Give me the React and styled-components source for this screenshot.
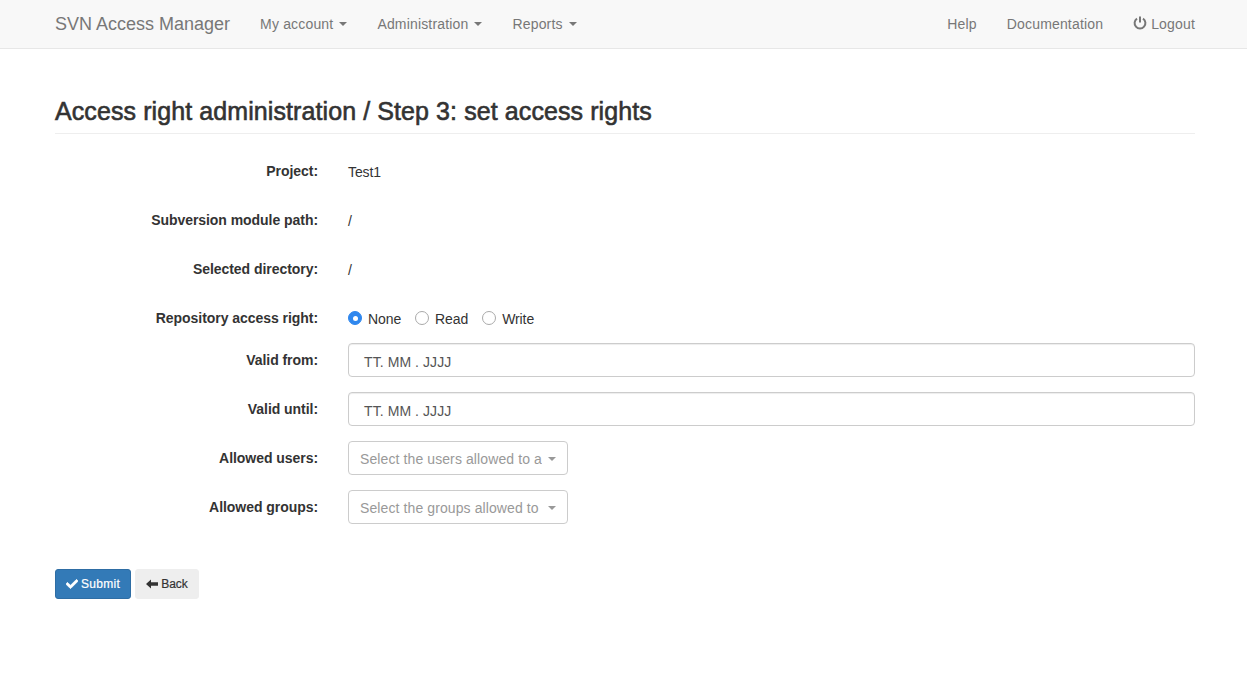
import React from "react";
import styled, { createGlobalStyle } from "styled-components";
import { FaCheck } from "react-icons/fa";

const GlobalStyle = createGlobalStyle`
  * { box-sizing: border-box; }
  body {
    margin: 0;
    background: #fff;
    color: #333;
    font-family: "Liberation Sans", Arial, sans-serif;
    font-size: 14px;
    line-height: 20px;
  }
`;

const Navbar = styled.nav`
  display: flex;
  align-items: center;
  height: 49px;
  padding: 0 52px 0 55px;
  background: #f8f8f8;
  border-bottom: 1px solid #e7e7e7;
`;

const Brand = styled.a`
  font-size: 18px;
  color: #777;
  margin-right: 30px;
`;

const NavLink = styled.a`
  display: flex;
  align-items: center;
  color: #777;
  letter-spacing: 0.17px;
  margin-right: ${(p) => p.$gap ?? 30}px;
`;

const Caret = styled.span`
  display: inline-block;
  margin-left: 6px;
  border-top: 4px solid ${(p) => p.$color || "#777"};
  border-left: 4px solid transparent;
  border-right: 4px solid transparent;
`;

const Spacer = styled.div`
  flex: 1;
`;

const Page = styled.main`
  padding: 49px 52px 0 55px;
`;

const Title = styled.h1`
  margin: 0 0 20px;
  padding-bottom: 9px;
  border-bottom: 1px solid #eee;
  font-size: 25px;
  line-height: 26px;
  font-weight: 500;
  letter-spacing: 0.09px;
  color: #333;
  -webkit-text-stroke: 0.6px #333;
`;

const Row = styled.div`
  display: flex;
  min-height: 34px;
  margin-bottom: ${(p) => p.$gap ?? 15}px;
`;

const Label = styled.label`
  flex: 0 0 263px;
  padding-top: 7px;
  text-align: right;
  font-weight: 700;
  letter-spacing: -0.05px;
  margin-right: 30px;
`;

const Static = styled.div`
  padding-top: 8px;
  letter-spacing: -0.1px;
`;

const Radios = styled.div`
  display: flex;
  align-items: center;
  gap: 14px;
  padding-top: 2px;
  letter-spacing: -0.1px;
`;

const RadioLabel = styled.span`
  display: flex;
  align-items: center;
  gap: 6px;
`;

const RadioDot = styled.span`
  width: 14px;
  height: 14px;
  margin-top: -2px;
  border-radius: 50%;
  background: ${(p) => (p.$checked ? "#2f87ee" : "#fff")};
  border: 1px solid ${(p) => (p.$checked ? "#2f87ee" : "#aaa")};
  display: flex;
  align-items: center;
  justify-content: center;
  &::after {
    content: "";
    display: ${(p) => (p.$checked ? "block" : "none")};
    width: 5px;
    height: 5px;
    border-radius: 50%;
    background: #fff;
  }
`;

const DateField = styled.div`
  flex: 1;
  height: 34px;
  padding: 8px 15px 6px;
  color: #555;
  letter-spacing: 0.08px;
  border: 1px solid #ccc;
  border-radius: 4px;
  box-shadow: inset 0 1px 1px rgba(0, 0, 0, 0.075);
`;

const SelectBox = styled.div`
  display: flex;
  align-items: center;
  width: 220px;
  height: 34px;
  padding: 2px 11px 0;
  color: #999;
  letter-spacing: 0.1px;
  border: 1px solid #ccc;
  border-radius: 4px;
`;

const SelectText = styled.span`
  width: 182px;
  overflow: hidden;
  white-space: nowrap;
`;

const Actions = styled.div`
  display: flex;
  gap: 4px;
  margin-top: 45px;
`;

const Button = styled.button`
  display: flex;
  align-items: center;
  gap: 3px;
  height: 30px;
  padding: 0 10px;
  font-family: inherit;
  font-size: 12px;
  line-height: 18px;
  border-radius: 3px;
  letter-spacing: ${(p) => (p.$primary ? "0.3px" : "0")};
  border: 1px solid ${(p) => (p.$primary ? "#2e6da4" : "#eee")};
  background: ${(p) => (p.$primary ? "#337ab7" : "#eee")};
  color: ${(p) => (p.$primary ? "#fff" : "#333")};
  -webkit-text-stroke: 0.2px currentColor;
`;

const CheckIcon = styled(FaCheck)`
  stroke: currentColor;
  stroke-width: 30;
`;

const PowerIcon = () => (
  <svg width="14" height="14" viewBox="0 0 14 14" fill="none" stroke="#777" strokeWidth="2" style={{ marginRight: 4, marginTop: -3 }}>
    <path d="M4 2.6a5.4 5.4 0 1 0 6 0" />
    <path d="M7 0.4v6.2" />
  </svg>
);

const BackArrow = () => (
  <svg width="12" height="10" viewBox="0 0 12 10" fill="currentColor">
    <path d="M0 5 5 0.5V3.2H12V6.8H5V9.5Z" />
  </svg>
);

const rows = [
  ["Project:", "Test1"],
  ["Subversion module path:", "/"],
  ["Selected directory:", "/"],
];

export default function App() {
  return (
    <>
      <GlobalStyle />
      <Navbar>
        <Brand>SVN Access Manager</Brand>
        <NavLink>My account<Caret /></NavLink>
        <NavLink>Administration<Caret /></NavLink>
        <NavLink>Reports<Caret /></NavLink>
        <Spacer />
        <NavLink>Help</NavLink>
        <NavLink>Documentation</NavLink>
        <NavLink $gap={0}><PowerIcon />Logout</NavLink>
      </Navbar>
      <Page>
        <Title>Access right administration / Step 3: set access rights</Title>
        {rows.map(([label, value]) => (
          <Row key={label}>
            <Label>{label}</Label>
            <Static>{value}</Static>
          </Row>
        ))}
        <Row $gap={8}>
          <Label>Repository access right:</Label>
          <Radios>
            <RadioLabel><RadioDot $checked />None</RadioLabel>
            <RadioLabel><RadioDot />Read</RadioLabel>
            <RadioLabel><RadioDot />Write</RadioLabel>
          </Radios>
        </Row>
        <Row>
          <Label>Valid from:</Label>
          <DateField>TT. MM . JJJJ</DateField>
        </Row>
        <Row>
          <Label>Valid until:</Label>
          <DateField>TT. MM . JJJJ</DateField>
        </Row>
        <Row>
          <Label>Allowed users:</Label>
          <SelectBox>
            <SelectText>Select the users allowed to access</SelectText>
            <Caret $color="#999" />
          </SelectBox>
        </Row>
        <Row>
          <Label>Allowed groups:</Label>
          <SelectBox>
            <SelectText>Select the groups allowed to</SelectText>
            <Caret $color="#999" />
          </SelectBox>
        </Row>
        <Actions>
          <Button $primary><CheckIcon size={12} />Submit</Button>
          <Button><BackArrow />Back</Button>
        </Actions>
      </Page>
    </>
  );
}
